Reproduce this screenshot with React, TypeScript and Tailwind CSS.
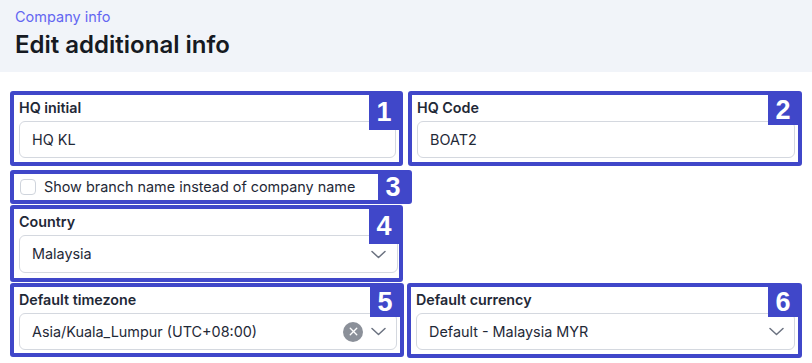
import { X } from 'lucide-react';

const font = { fontFamily: 'Inter, "Noto Sans", sans-serif' };

function Chevron() {
  return (
    <svg width="15" height="9" viewBox="0 0 15 9" fill="none" className="shrink-0">
      <polyline points="1,1.5 7.5,7.5 14,1.5" stroke="#6b7280" strokeWidth="1.5" strokeLinecap="round" strokeLinejoin="round" />
    </svg>
  );
}

function Badge({ n, h = 'h-[35px]' }: { n: string; h?: string }) {
  return (
    <div
      className={`absolute top-0 right-0 w-[30px] ${h} bg-[#4047c9] text-white text-[27px] font-bold leading-none flex items-center justify-center`}
      style={{ fontFamily: '"Liberation Sans", Arial, sans-serif' }}
    >
      {n}
    </div>
  );
}

function Field({ label, children }: { label: string; children: React.ReactNode }) {
  return (
    <div className="pl-[5px] pr-[3px] pt-[3px]">
      <div className="text-[14.3px] leading-[19px] font-semibold text-[#1f2937]">{label}</div>
      <div className="mt-[4px] h-[37px] border border-[#d4d8df] rounded-[6px] flex items-center pl-[12px] pr-[10px] text-[14.4px] text-[#1f2937]">
        {children}
      </div>
    </div>
  );
}

function Box({
  n,
  className,
  badgeH,
  children,
}: {
  n: string;
  className: string;
  badgeH?: string;
  children: React.ReactNode;
}) {
  return (
    <div className={`relative border-4 border-[#4047c9] rounded-[3px] bg-white ${className}`}>
      {children}
      <Badge n={n} h={badgeH} />
    </div>
  );
}

export default function App() {
  return (
    <div className="w-[812px] h-[363px] bg-white overflow-hidden" style={font}>
      {/* Header */}
      <div className="h-[72px] bg-[#f1f4f9] px-[15px] pt-[7px]">
        <div className="text-[14.5px] leading-[20px] text-[#6366f1]">Company info</div>
        <div className="mt-[2px] text-[24px] leading-[32px] font-semibold text-[#161a22]">
          Edit additional info
        </div>
      </div>

      <div className="pl-[10px] pt-[19px]">
        {/* Row 1 */}
        <div className="flex gap-[5px]">
          <Box n="1" className="w-[393px] h-[75px]">
            <Field label="HQ initial">HQ KL</Field>
          </Box>
          <Box n="2" className="w-[394px] h-[75px]" badgeH="h-[30px]">
            <Field label="HQ Code">BOAT2</Field>
          </Box>
        </div>

        {/* Row 2 */}
        <div className="mt-[4px] flex">
          <Box n="3" className="w-[402px] h-[34px]" badgeH="h-[26px]">
            <div className="h-full flex items-center pl-[6px] gap-[8px] text-[14.4px] text-[#1f2937]">
              <div className="w-[16px] h-[16px] border border-[#cfd4dc] rounded-[4px] bg-white" />
              <span>Show branch name instead of company name</span>
            </div>
          </Box>
        </div>

        {/* Row 3 */}
        <div className="mt-[1px] flex">
          <Box n="4" className="w-[393px] h-[77px]">
            <div className="pl-[5px] pr-[1px] pt-[3px]">
              <div className="text-[14.3px] leading-[19px] font-semibold text-[#1f2937]">Country</div>
              <div className="mt-[4px] h-[38px] border border-[#d4d8df] rounded-[6px] flex items-center pl-[12px] pr-[11px] text-[14.4px] text-[#1f2937]">
                <span className="flex-1">Malaysia</span>
                <Chevron />
              </div>
            </div>
          </Box>
        </div>

        {/* Row 4 */}
        <div className="mt-[1px] flex gap-[3px]">
          <Box n="5" className="w-[394px] h-[74px]" badgeH="h-[30px]">
            <Field label="Default timezone">
              <span className="flex-1">Asia/Kuala_Lumpur (UTC+08:00)</span>
              <div className="w-[20px] h-[20px] rounded-full bg-[#8b9099] flex items-center justify-center mr-[8px]">
                <X className="w-[13px] h-[13px] text-white" strokeWidth={2.5} />
              </div>
              <Chevron />
            </Field>
          </Box>
          <Box n="6" className="w-[395px] h-[75px]" badgeH="h-[30px]">
            <Field label="Default currency">
              <span className="flex-1">Default - Malaysia MYR</span>
              <Chevron />
            </Field>
          </Box>
        </div>
      </div>
    </div>
  );
}
